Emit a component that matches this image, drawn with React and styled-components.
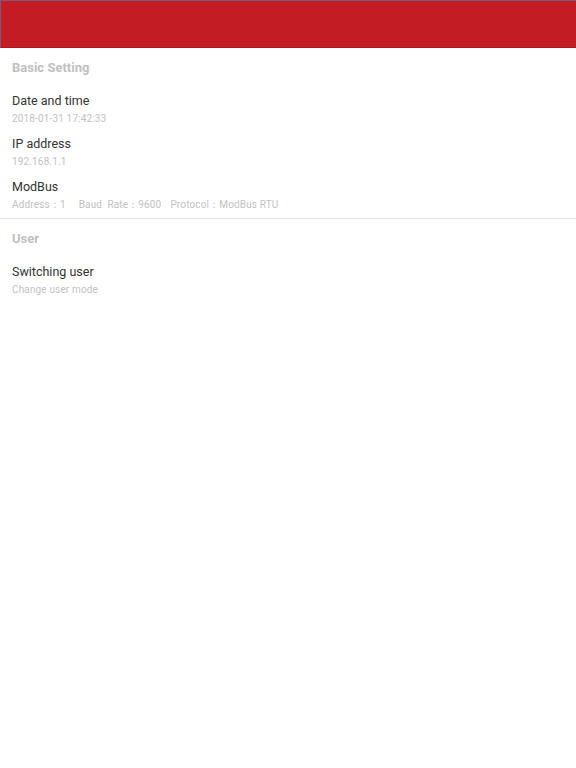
import React from 'react';
import styled, { createGlobalStyle } from 'styled-components';

const GlobalStyle = createGlobalStyle`
  html, body {
    margin: 0;
    padding: 0;
    background: #ffffff;
    font-family: Roboto, 'Liberation Sans', sans-serif;
  }
`;

const Page = styled.div`
  width: 576px;
  min-height: 768px;
  background: #ffffff;
`;

const NavBar = styled.div`
  height: 48px;
  box-sizing: border-box;
  background: #c41c24;
  border-top: 1px solid #7a5a78;
  border-left: 1px solid #7a5a78;
  border-bottom: 1px solid #b0181f;
`;

const Section = styled.section`
  padding-bottom: ${(p) => (p.last ? 0 : 3)}px;
  border-bottom: ${(p) => (p.last ? 'none' : '1px solid #e6e6e6')};
`;

const SectionTitle = styled.div`
  height: 38px;
  display: flex;
  align-items: center;
  padding-left: 12px;
  font-size: 13px;
  font-weight: 700;
  color: #c0c0c0;
`;

const Item = styled.div`
  padding: 6px 12px 2px;
`;

const ItemTitle = styled.div`
  font-size: 12.5px;
  line-height: 18px;
  color: #333333;
`;

const ItemSub = styled.div`
  margin-top: 1px;
  font-size: 10px;
  line-height: 16px;
  letter-spacing: 0.15px;
  color: #c2c2c2;
  white-space: pre;
`;

const Field = styled.span`
  margin-right: ${(p) => p.gap || 0}px;
`;

const SettingItem = ({ title, children }) => (
  <Item>
    <ItemTitle>{title}</ItemTitle>
    <ItemSub>{children}</ItemSub>
  </Item>
);

export default function App() {
  return (
    <Page>
      <GlobalStyle />
      <NavBar />
      <Section>
        <SectionTitle>Basic Setting</SectionTitle>
        <SettingItem title="Date and time">2018-01-31 17:42:33</SettingItem>
        <SettingItem title="IP address">192.168.1.1</SettingItem>
        <SettingItem title="ModBus">
          <Field gap={13}>Address：1</Field>
          <Field gap={9}>Baud  Rate：9600</Field>
          <Field>Protocol：ModBus RTU</Field>
        </SettingItem>
      </Section>
      <Section last>
        <SectionTitle>User</SectionTitle>
        <SettingItem title="Switching user">Change user mode</SettingItem>
      </Section>
    </Page>
  );
}
